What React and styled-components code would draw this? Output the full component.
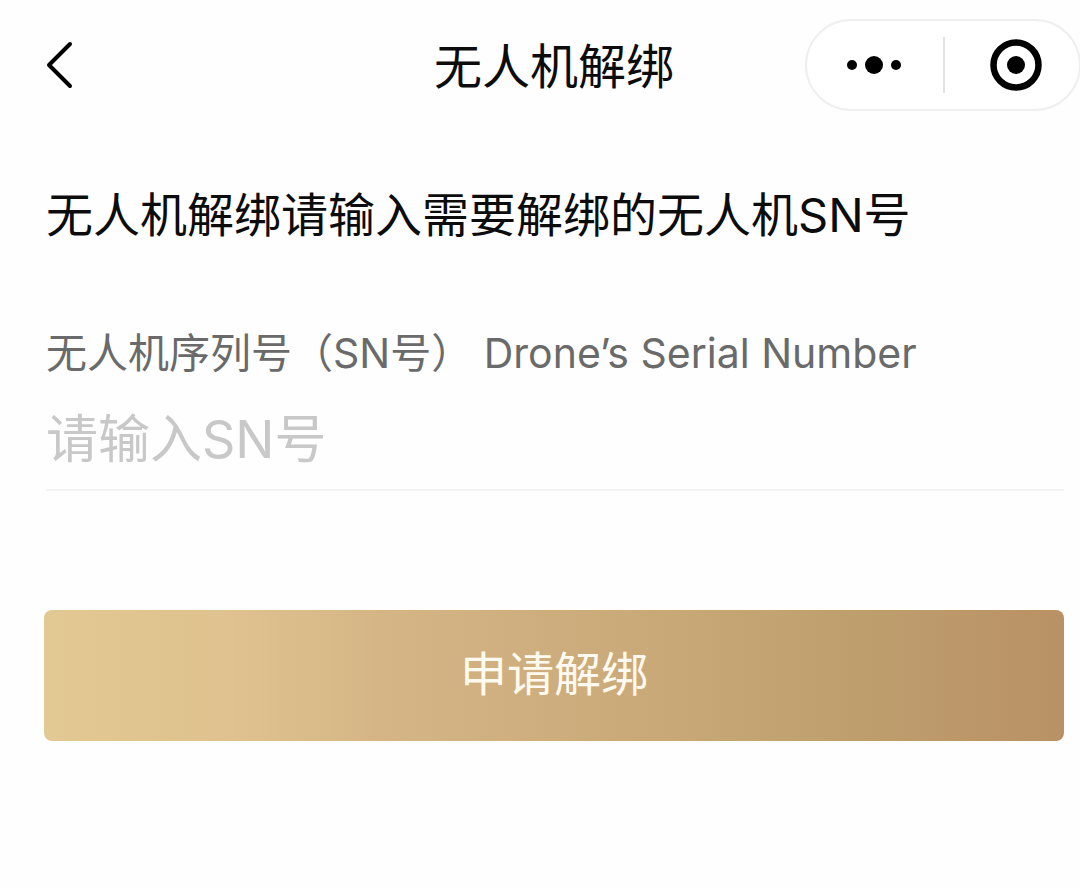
import React, { useState } from "react"
import styled, { createGlobalStyle } from "styled-components";

const GlobalStyle = createGlobalStyle`
    * {
        box-sizing: border-box;
    }

    body {
        margin: 0;
        background-color: #fefefe;
        color: #0c0c0c;
        font-family: Inter, "Noto Sans CJK SC", sans-serif;
        overflow-x: hidden;
    }

    button, input {
        font-family: inherit;
    }
`;

const Page = styled.div`
    padding: 19px 16px 48px 44px;
`;

const Header = styled.header`
    display: grid;
    grid-template-columns: 1fr auto 1fr;
    align-items: center;
`;

const IconButton = styled.button`
    display: flex;
    align-items: center;
    justify-content: center;
    padding: 0;
    border: none;
    background-color: transparent;
    color: #000;
    cursor: pointer;
`;

const BackButton = styled(IconButton)`
    justify-self: start;
`;

const Title = styled.h1`
    margin: 0;
    padding-top: 4px;
    font-size: 48px;
    font-weight: 400;
    line-height: 72px;
`;

const Capsule = styled.div`
    justify-self: end;
    display: grid;
    grid-template-columns: 138px 1fr;
    align-items: center;
    width: 276px;
    height: 92px;
    margin-right: -17px;
    border: 2px solid #efefef;
    border-radius: 46px;
    background-color: #fff;
`;

const MoreButton = styled(IconButton)`
    height: 56px;
    padding-right: 2px;
    border-right: 2px solid #e2e2e2;
`;

const CloseButton = styled(IconButton)`
    height: 56px;
    padding-left: 8px;
`;

const Form = styled.form`
    display: flex;
    flex-direction: column;
`;

const Heading = styled.h2`
    margin: 68px 0 0 2px;
    font-size: 47px;
    font-weight: 400;
    line-height: 72px;
`;

const Field = styled.div`
    display: flex;
    flex-direction: column;
    margin: 72px 0 119px 2px;
    border-bottom: 2px solid #f3f3f3;
`;

const Label = styled.label`
    color: #6a6a6a;
    font-size: 41px;
    line-height: 60px;
`;

const Input = styled.input`
    width: 100%;
    height: 106px;
    padding: 6px 0 0;
    border: none;
    outline: none;
    background-color: transparent;
    color: #0c0c0c;
    font-size: 52px;

    &::placeholder {
        color: #c8c8c8;
        opacity: 1;
    }
`;

const SubmitButton = styled.button`
    height: 131px;
    padding: 0 0 4px;
    border: none;
    border-radius: 8px;
    background: linear-gradient(90deg, #e2c892, #dfc28f 18%, #d5b585 33%, #c9a878 62%, #be9d6d 82%, #b99164);
    color: #fffaf0;
    font-size: 47px;
    line-height: 72px;
    cursor: pointer;
`;

const BackIcon = () => (
    <svg width="32" height="52" viewBox="0 0 32 52" fill="none" aria-hidden="true">
        <path d="M26 5L5 26L26 47" stroke="currentColor" strokeWidth="4" strokeLinecap="round" strokeLinejoin="round"/>
    </svg>
)

const MoreIcon = () => (
    <svg width="56" height="20" viewBox="0 0 56 20" fill="currentColor" aria-hidden="true">
        <circle cx="6" cy="10" r="5"/>
        <circle cx="28" cy="10" r="9"/>
        <circle cx="50" cy="10" r="5"/>
    </svg>
)

const CloseIcon = () => (
    <svg width="52" height="52" viewBox="0 0 52 52" aria-hidden="true">
        <circle cx="26" cy="26" r="22.5" fill="none" stroke="currentColor" strokeWidth="6.5"/>
        <circle cx="26" cy="26" r="9" fill="currentColor"/>
    </svg>
)

export default function App() {

    const [ serialNumber, setSerialNumber ] = useState('');

    const handleChange = (event) => {
        setSerialNumber(event.target.value)
    }

    const handleSubmit = (event) => {
        event.preventDefault()
    }

    return(
        <Page>
            <GlobalStyle/>
            <Header>
                <BackButton type="button">
                    <BackIcon/>
                </BackButton>
                <Title>无人机解绑</Title>
                <Capsule>
                    <MoreButton type="button">
                        <MoreIcon/>
                    </MoreButton>
                    <CloseButton type="button">
                        <CloseIcon/>
                    </CloseButton>
                </Capsule>
            </Header>
            <Form onSubmit={handleSubmit}>
                <Heading>无人机解绑请输入需要解绑的无人机SN号</Heading>
                <Field>
                    <Label htmlFor="serial">
                        无人机序列号（SN号） Drone’s Serial Number
                    </Label>
                    <Input
                        id="serial"
                        value={serialNumber}
                        onChange={handleChange}
                        placeholder="请输入SN号"
                    />
                </Field>
                <SubmitButton type="submit">
                    申请解绑
                </SubmitButton>
            </Form>
        </Page>
    )
}
